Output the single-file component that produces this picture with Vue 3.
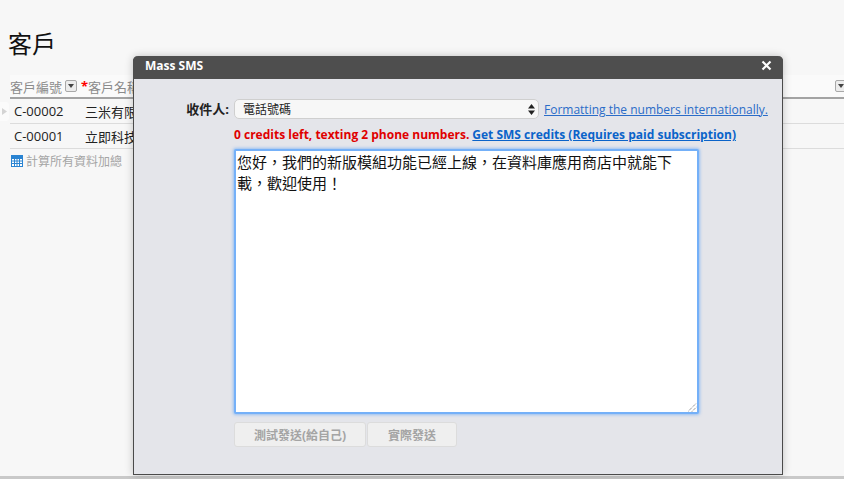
<script setup>
const rows = [
  { id: 'C-00002', name: '三米有限公司' },
  { id: 'C-00001', name: '立即科技' },
]
</script>

<template>
  <div class="page">
    <h1 class="title">客戶</h1>
    <div class="table">
      <div class="thead">
        <span class="th th-id">客戶編號<i class="drop"></i></span>
        <span class="th th-name"><b class="req">*</b>客戶名稱</span>
        <i class="drop drop-end"></i>
      </div>
      <div v-for="(r, i) in rows" :key="r.id" class="row">
        <span v-if="i === 0" class="row-tab">
          <svg width="7" height="9" viewBox="0 0 7 9"><path d="M1 1l5 3.5L1 8z" fill="#d4d4d4" /></svg>
        </span>
        <span class="td-id">{{ r.id }}</span>
        <span class="td-name">{{ r.name }}</span>
      </div>
      <div class="sum">
        <svg class="calc" width="12" height="12" viewBox="0 0 12 12">
          <rect x=".5" y=".5" width="11" height="11" fill="#fff" stroke="#2a84d2" />
          <rect x="1" y="1" width="10" height="3" fill="#2a84d2" />
          <path d="M1 6h10M1 8.5h10M3.5 4v7M6 4v7M8.5 4v7" stroke="#2a84d2" fill="none" />
        </svg>
        <span>計算所有資料加總</span>
      </div>
    </div>
    <div class="bottom"></div>

    <section class="modal">
      <header class="modal-head">
        <span>Mass SMS</span>
        <svg class="close" width="11" height="11" viewBox="0 0 11 11">
          <path d="M1.5 1.5l8 8M9.5 1.5l-8 8" stroke="#fff" stroke-width="2.2" fill="none" />
        </svg>
      </header>
      <div class="modal-body">
        <label class="lbl">收件人:</label>
        <div class="to-line">
          <div class="select">
            <span>電話號碼</span>
            <svg width="7" height="11" viewBox="0 0 7 11"><path d="M3.5 0L7 4.4H0zM3.5 11L0 6.6h7z" fill="#222" /></svg>
          </div>
          <a class="fmt">Formatting the numbers internationally.</a>
        </div>
        <p class="credit">
          <span class="err">0 credits left, texting 2 phone numbers.</span>
          <a class="get">Get SMS credits (Requires paid subscription)</a>
        </p>
        <div class="msg">
          您好，我們的新版模組功能已經上線，在資料庫應用商店中就能下載，歡迎使用！
          <svg class="grip" width="9" height="9" viewBox="0 0 9 9">
            <path d="M0 8.5L8.5 0M4 8.5L8.5 4" stroke="#666" stroke-dasharray="1 1" fill="none" />
          </svg>
        </div>
        <div class="btns">
          <button class="btn btn-a" type="button">測試發送(給自己)</button>
          <button class="btn btn-b" type="button">實際發送</button>
        </div>
      </div>
    </section>
  </div>
</template>

<style>
html, body { margin: 0; }
</style>

<style scoped>
.page {
  position: relative;
  width: 844px;
  height: 479px;
  overflow: hidden;
  background: #f7f7f7;
  font-family: "Open Sans", "Noto Sans CJK TC", sans-serif;
}
.title {
  margin: 0;
  padding: 28px 0 0 8px;
  height: 75px;
  box-sizing: border-box;
  font-size: 24px;
  line-height: 32px;
  font-weight: 400;
  color: #111;
}
.table { margin-left: 10px; }
.thead {
  display: flex;
  align-items: center;
  height: 22px;
  border-bottom: 2px solid #a3a3a3;
  background: #fafafa;
  font-size: 13px;
  color: #8b8b8b;
}
.th { display: flex; align-items: center; white-space: nowrap; }
.th-id { width: 71px; }
.req { color: #f00; font-weight: 700; }
.drop {
  display: block;
  position: relative;
  flex: none;
  box-sizing: border-box;
  width: 12px;
  height: 12px;
  margin-left: 3px;
  border: 1px solid #a8a8a8;
  border-radius: 2px;
  background: #ececec;
}
.drop::after {
  content: "";
  position: absolute;
  left: 2px;
  top: 3px;
  border: 3px solid transparent;
  border-top: 4px solid #444;
  border-bottom: 0;
}
.drop-end { margin-left: auto; margin-right: -3px; }
.row {
  position: relative;
  display: flex;
  align-items: center;
  height: 24px;
  border-bottom: 1px solid #dcdcdc;
  font-size: 13px;
  color: #222;
}
.row-tab {
  position: absolute;
  left: -10px;
  top: 3px;
  display: flex;
  align-items: center;
  justify-content: center;
  width: 9px;
  height: 19px;
  background: #fbfbfb;
  border-radius: 0 3px 3px 0;
}
.td-id { width: 71px; margin-left: 4px; }
.td-name { white-space: nowrap; }
.sum {
  display: flex;
  align-items: center;
  gap: 3px;
  height: 24px;
  padding-left: 1px;
  font-size: 12px;
  color: #a5a5a5;
}
.bottom {
  position: absolute;
  left: 0;
  right: 0;
  bottom: 0;
  height: 3px;
  background: #c9c9c9;
}
.modal {
  position: absolute;
  left: 133px;
  top: 56px;
  width: 650px;
  height: 419px;
  box-sizing: border-box;
  border: 1px solid #4a4a4a;
  border-top: 0;
  border-radius: 5px 5px 0 0;
  background: #e4e5ea;
  box-shadow: 0 0 9px rgba(0, 0, 0, .22);
}
.modal-head {
  display: flex;
  align-items: center;
  justify-content: space-between;
  height: 23px;
  margin: 0 -1px;
  padding: 0 11px 4px 12px;
  box-sizing: border-box;
  border-radius: 5px 5px 0 0;
  background: #4e4e4e;
  color: #fff;
  font-size: 12px;
  font-weight: 700;
}
.modal-body {
  display: grid;
  grid-template-columns: 100px 1fr;
  padding: 20px 0 0;
}
.lbl {
  width: 95px;
  height: 20px;
  line-height: 20px;
  font-size: 13px;
  font-weight: 700;
  color: #222;
  text-align: right;
}
.to-line { display: flex; align-items: center; gap: 5px; height: 20px; }
.select {
  display: flex;
  align-items: center;
  justify-content: space-between;
  box-sizing: border-box;
  width: 305px;
  height: 20px;
  padding: 0 3px 0 8px;
  border: 1px solid #cfcfcf;
  border-radius: 5px;
  background: #f7f7f7;
  font-size: 12px;
  color: #222;
}
.fmt {
  color: #2a6cc8;
  text-decoration: underline;
  font-size: 12px;
  white-space: nowrap;
}
.credit {
  grid-column: 2;
  display: flex;
  gap: 3px;
  margin: 6px 0 4px;
  height: 20px;
  line-height: 20px;
  font-size: 12px;
  font-weight: 700;
  white-space: nowrap;
}
.err { color: #e00000; }
.get { color: #0a63c9; text-decoration: underline; }
.msg {
  grid-column: 2;
  position: relative;
  box-sizing: border-box;
  width: 465px;
  height: 265px;
  padding: 1px 20px 0 1px;
  border: 2px solid #74b0f8;
  border-radius: 2px;
  background: #fff;
  box-shadow: 0 0 3px 1px rgba(120, 175, 245, .7);
  font-size: 15px;
  line-height: 21px;
  color: #111;
}
.grip { position: absolute; right: 0; bottom: 0; }
.btns { grid-column: 2; display: flex; gap: 1px; margin-top: 8px; }
.btn {
  height: 25px;
  padding: 0;
  border: 1px solid #dcdcdc;
  border-radius: 3px;
  background: #efefef;
  color: #a4a4a4;
  font: 700 12px "Open Sans", "Noto Sans CJK TC", sans-serif;
}
.btn-a { width: 132px; }
.btn-b { width: 90px; }
</style>
